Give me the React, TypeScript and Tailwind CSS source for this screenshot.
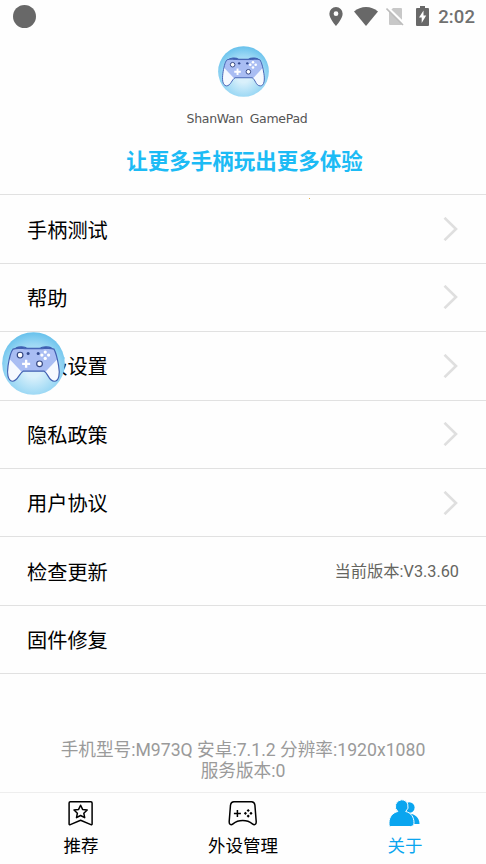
import React from 'react'

// ─── Data ─────────────────────────────────────────────────────────────────────

type MenuItem = { label: string; value?: string; arrow?: boolean }

const menu: MenuItem[] = [
  { label: '手柄测试', arrow: true },
  { label: '帮助', arrow: true },
  { label: '高级设置', arrow: true },
  { label: '隐私政策', arrow: true },
  { label: '用户协议', arrow: true },
  { label: '检查更新', value: '当前版本:V3.3.60' },
  { label: '固件修复' },
]

export default function App() {
  return (
    <div className="relative flex h-[864px] w-[486px] flex-col overflow-hidden bg-[#fefefe] font-[Roboto,'Noto_Sans_CJK_SC',sans-serif] text-black">
      <StatusBar />
      <Header />

      <main className="flex flex-1 flex-col">
        {menu.map((item) => (
          <MenuRow key={item.label} {...item} />
        ))}
        <div className="border-t border-[#e1e1e1] pt-[66px] text-center text-[17.65px] leading-[21px] text-[#9a9a9a]">
          <p>手机型号:M973Q 安卓:7.1.2 分辨率:1920x1080</p>
          <p>服务版本:0</p>
        </div>
      </main>

      <nav className="grid h-[72px] shrink-0 grid-cols-3 border-t border-[#eeeeee]">
        <Tab icon={<BookmarkIcon />} label="推荐" />
        <Tab icon={<PadIcon />} label="外设管理" />
        <Tab icon={<PeopleIcon />} label="关于" active />
      </nav>

      {/* Floating shortcut and pointer speck */}
      <div className="absolute top-[332px] left-[2px] h-[63px] w-[63px]">
        <GamepadLogo id="float" />
      </div>
      <span className="absolute top-[198px] left-[309px] h-px w-px bg-[#e8b04a]" />
    </div>
  )
}

// ─── Status bar ───────────────────────────────────────────────────────────────

function StatusBar() {
  return (
    <div className="flex h-8 shrink-0 items-center justify-between pr-[11px] pl-[13px]">
      <span className="h-[23px] w-[23px] rounded-full bg-[#686868]" />
      <div className="flex items-center text-[#686868]">
        <svg className="mr-[11px] h-[19px] w-[14px]" viewBox="0 0 14 20" fill="currentColor">
          <path
            fillRule="evenodd"
            d="M7 0a7 7 0 0 0-7 7c0 5.2 7 13 7 13s7-7.800 7-13a7 7 0 0 0-7-7Zm0 4.500a2.500 2.500 0 1 1 0 5 2.500 2.500 0 0 1 0-5Z"
          />
        </svg>
        <svg className="mr-[8px] h-[19px] w-6" viewBox="0 0 24 19" fill="currentColor">
          <path d="M0 4.500C3.500 1.500 7.500 0 12 0s8.500 1.500 12 4.500L12 19Z" />
        </svg>
        <svg className="mr-[12px] h-[19px] w-[18px]" viewBox="0 0 18 19">
          <path d="M7 1h8q1 0 1 1v15q0 1-1 1H4q-1 0-1-1V5Z" fill="#c8c8c8" />
          <path d="M1 0 18.500 17" stroke="#fefefe" strokeWidth="2.500" />
          <path d="M.5 1.500 17 18" stroke="#bcbcbc" strokeWidth="1.600" />
        </svg>
        <svg className="mr-[9px] h-5 w-[13px]" viewBox="0 0 13 20">
          <path d="M4 0h5v2h3a1 1 0 0 1 1 1v16a1 1 0 0 1-1 1H1a1 1 0 0 1-1-1V3a1 1 0 0 1 1-1h3Z" fill="#686868" />
          <path d="M7.500 4.500 3 11.500h2.700V17L10.200 9.500H7.500Z" fill="#fefefe" />
        </svg>
        <span className="pt-[3px] text-[18.5px] leading-none font-medium text-[#707070] tracking-[0.1px]">2:02</span>
      </div>
    </div>
  )
}

// ─── Logo and slogan ──────────────────────────────────────────────────────────

function Header() {
  return (
    <header className="flex h-[162.4px] shrink-0 flex-col items-center pt-[14px]">
      <div className="h-[51px] w-[51px]">
        <GamepadLogo id="header" />
      </div>
      <h1 className="mt-[13px] ml-2 font-['DejaVu_Sans',sans-serif] text-[12.5px] leading-[18px] tracking-[-0.3px] [word-spacing:3px] text-[#555555]">
        ShanWan GamePad
      </h1>
      <p className="mt-[22px] ml-[3px] text-[21.5px] leading-6 font-bold text-[#1cbbf5]">让更多手柄玩出更多体验</p>
    </header>
  )
}

// ─── Menu row ─────────────────────────────────────────────────────────────────

function MenuRow({ label, value, arrow }: MenuItem) {
  return (
    <div className="flex h-[68.4px] shrink-0 items-center justify-between border-t border-[#e1e1e1] pr-[27px] pl-[27px]">
      <span className="pt-[3px] text-[20.2px] leading-7">{label}</span>
      {value && <span className="pt-[3px] text-[16.25px] text-[#65655f]">{value}</span>}
      {arrow && (
        <svg className="mr-px h-6 w-[15px]" viewBox="0 0 15 24" fill="none" stroke="#dfdfdf" strokeWidth="2.600">
          <path d="m1.500.8 11.500 11.200-11.500 11.200" />
        </svg>
      )}
    </div>
  )
}

// ─── Bottom tabs ──────────────────────────────────────────────────────────────

function Tab({ icon, label, active }: { icon: React.ReactNode; label: string; active?: boolean }) {
  return (
    <div className={active ? 'flex flex-col items-center pt-[6px] text-[#0aa5ef]' : 'flex flex-col items-center pt-[6px]'}>
      {icon}
      <span className="mt-[7px] text-[17.5px] leading-6">{label}</span>
    </div>
  )
}

function BookmarkIcon() {
  return (
    <svg className="h-7 w-8" viewBox="0 0 32 28" fill="none" stroke="currentColor" strokeWidth="1.500" strokeLinejoin="round">
      <path d="M5.300 2.700h20.600q1.200 0 1.200 1.200v21q0 1.200-1.200.7L15.600 21.300 5.300 25.600q-1.200.5-1.200-.7v-21q0-1.200 1.200-1.200Z" />
      <path d="m15.600 6.200 2 4.200 4.600.6-3.400 3.200.9 4.500-4.100-2.200-4.100 2.200.9-4.500L9 11l4.600-.6Z" />
    </svg>
  )
}

function PadIcon() {
  return (
    <svg className="h-7 w-8" viewBox="0 0 32 28" fill="none" stroke="currentColor" strokeWidth="1.500" strokeLinejoin="round">
      <path d="M6.900 2.800h17.600c2.300 0 3.100 1.200 3.400 3.200l1.300 16.500c.2 3.200-1.800 3.900-3.800 2.300-5.400-4.300-13.900-4.300-19.400 0-2 1.600-4 .9-3.800-2.300L3.500 6c.3-2 1.100-3.200 3.400-3.200Z" />
      <path d="M10.400 11v7M6.900 14.500h7" />
      <path
        d="m21.200 9.900 1.600 1.600-1.600 1.600-1.600-1.600ZM21.200 15.500l1.600 1.600-1.600 1.600-1.600-1.600ZM18.400 12.700l1.600 1.600-1.600 1.600-1.600-1.600ZM24 12.700l1.600 1.600-1.600 1.600-1.600-1.600Z"
        fill="currentColor"
        stroke="none"
      />
    </svg>
  )
}

function PeopleIcon() {
  return (
    <svg className="h-7 w-8" viewBox="0 0 32 28" fill="currentColor">
      <circle cx="20.300" cy="8.500" r="5.300" />
      <path d="M19 14.500c7 0 11.500 4.500 11.500 10.500H19Z" />
      <path
        d="M12.500.8a6.600 6.600 0 0 1 4.200 11.700c5.200 1.200 8.300 5.500 8.300 11.200 0 2.500-1 3.800-3.500 3.800H1.500Q0 27.500 0 26v-2.300c0-5.700 3.600-10 8.800-11.200A6.600 6.600 0 0 1 12.500.8Z"
        stroke="#fefefe"
        strokeWidth="1"
      />
    </svg>
  )
}

// ─── Round gamepad logo ───────────────────────────────────────────────────────

function GamepadLogo({ id }: { id: string }) {
  return (
    <svg className="block h-full w-full" viewBox="0 0 188 188">
      <defs>
        <radialGradient id={id} cy="0.6" r="0.6">
          <stop offset="0.2" stopColor="#d9f0fb" />
          <stop offset="0.7" stopColor="#99d7f4" />
          <stop offset="1" stopColor="#67c1ec" />
        </radialGradient>
        <clipPath id={`${id}-pad`}>
          <path d="M33 51C46 46 60 50 73 50h42c13 0 27-4 40 1 8 14 11 32 14 50 4 22 2 46-13 46-17 0-18-24-30-30H63c-12 6-16 30-32 30-15-2-16-25-13-46 3-20 7-41 15-50Z" />
        </clipPath>
      </defs>
      <circle cx="94" cy="94" r="93.500" fill={`url(#${id})`} />
      <path d="M38 52C44 43 66 42 75 49h38c9-7 33-6 38 3" fill="#3d5eb1" stroke="#3d5eb1" strokeWidth="4" />
      <g clipPath={`url(#${id}-pad)`}>
        <path d="M0 40h188v120H0Z" fill="#a9bdf3" />
        <path d="M18 76 59 119 45 160H0V90Z" fill="#f6f9ff" />
        <path d="M170 76 129 119 143 160h45V90Z" fill="#f6f9ff" />
      </g>
      <path
        d="M33 51C46 46 60 50 73 50h42c13 0 27-4 40 1 8 14 11 32 14 50 4 22 2 46-13 46-17 0-18-24-30-30H63c-12 6-16 30-32 30-15-2-16-25-13-46 3-20 7-41 15-50Z"
        fill="none"
        stroke="#4261b2"
        strokeWidth="3.500"
      />
      <g fill="#fff" stroke="#344680" strokeWidth="3.500">
        <circle cx="54" cy="69" r="8.500" />
        <circle cx="112" cy="95" r="8.500" />
      </g>
      <g fill="#344b90">
        <circle cx="78" cy="64" r="4.500" />
        <circle cx="108" cy="64" r="4.500" />
      </g>
      <path d="M72 83v24M60 95h24" stroke="#fff" strokeWidth="7" />
      <g fill="#fff">
        <circle cx="129" cy="60" r="4.800" />
        <circle cx="129" cy="79" r="4.800" />
        <circle cx="119" cy="69" r="4.800" />
        <circle cx="139" cy="69" r="4.800" />
      </g>
    </svg>
  )
}
